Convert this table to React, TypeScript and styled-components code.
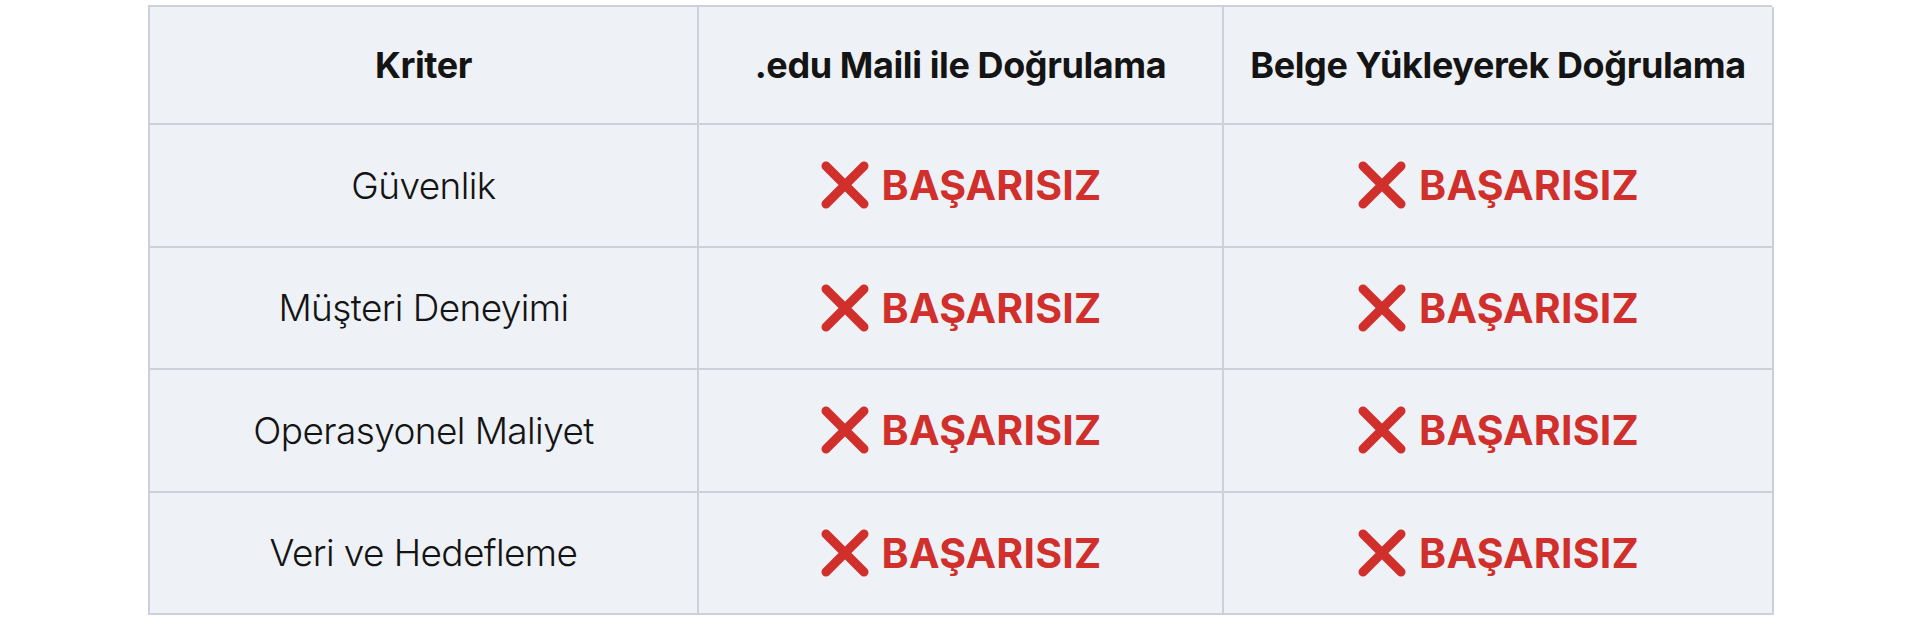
import React from 'react';
import styled, { createGlobalStyle } from 'styled-components';

const GlobalStyle = createGlobalStyle`
  html, body {
    margin: 0;
    padding: 0;
    background: #ffffff;
  }
  body {
    font-family: Inter, 'Noto Sans', sans-serif;
  }
  * {
    box-sizing: border-box;
  }
`;

const Page = styled.div`
  width: 1920px;
  height: 624px;
  display: flex;
  justify-content: center;
  align-items: flex-start;
  padding-top: 5px;
`;

const Table = styled.div`
  width: 1624px;
  display: grid;
  grid-template-columns: 549px 525px 550px;
  grid-template-rows: 118px;
  grid-auto-rows: 122.5px;
  background: #eef1f5;
  border-top: 2px solid #cdd1d7;
  border-left: 2px solid #cdd1d7;
`;

const Cell = styled.div<{ $head?: boolean }>`
  display: flex;
  align-items: center;
  justify-content: center;
  border-right: 2px solid #cdd1d7;
  border-bottom: 2px solid #cdd1d7;
  color: #141414;
  font-size: ${(p) => (p.$head ? '36px' : '37px')};
  font-weight: ${(p) => (p.$head ? 700 : 350)};
  letter-spacing: ${(p) => (p.$head ? '-0.4px' : '-0.6px')};
`;

const Fail = styled.span`
  display: flex;
  align-items: center;
  gap: 12px;
  color: #d02f2b;
  font-size: 41px;
  font-weight: 700;
  letter-spacing: 0.2px;
`;

const CrossMark = () => (
  <svg width="50" height="48" viewBox="0 0 50 48" aria-hidden="true">
    <path
      d="M6 5 L44 43 M44 5 L6 43"
      stroke="#d02f2b"
      strokeWidth="9"
      strokeLinecap="round"
      fill="none"
    />
  </svg>
);

const criteria = [
  'Güvenlik',
  'Müşteri Deneyimi',
  'Operasyonel Maliyet',
  'Veri ve Hedefleme',
];

const Basarisiz = () => (
  <Fail>
    <CrossMark />
    BAŞARISIZ
  </Fail>
);

const App = () => {
  return (
    <>
      <GlobalStyle />
      <Page>
        <Table>
          <Cell $head>Kriter</Cell>
          <Cell $head>.edu Maili ile Doğrulama</Cell>
          <Cell $head>Belge Yükleyerek Doğrulama</Cell>
          {criteria.map((c) => (
            <React.Fragment key={c}>
              <Cell>{c}</Cell>
              <Cell>
                <Basarisiz />
              </Cell>
              <Cell>
                <Basarisiz />
              </Cell>
            </React.Fragment>
          ))}
        </Table>
      </Page>
    </>
  );
};

export default App;
